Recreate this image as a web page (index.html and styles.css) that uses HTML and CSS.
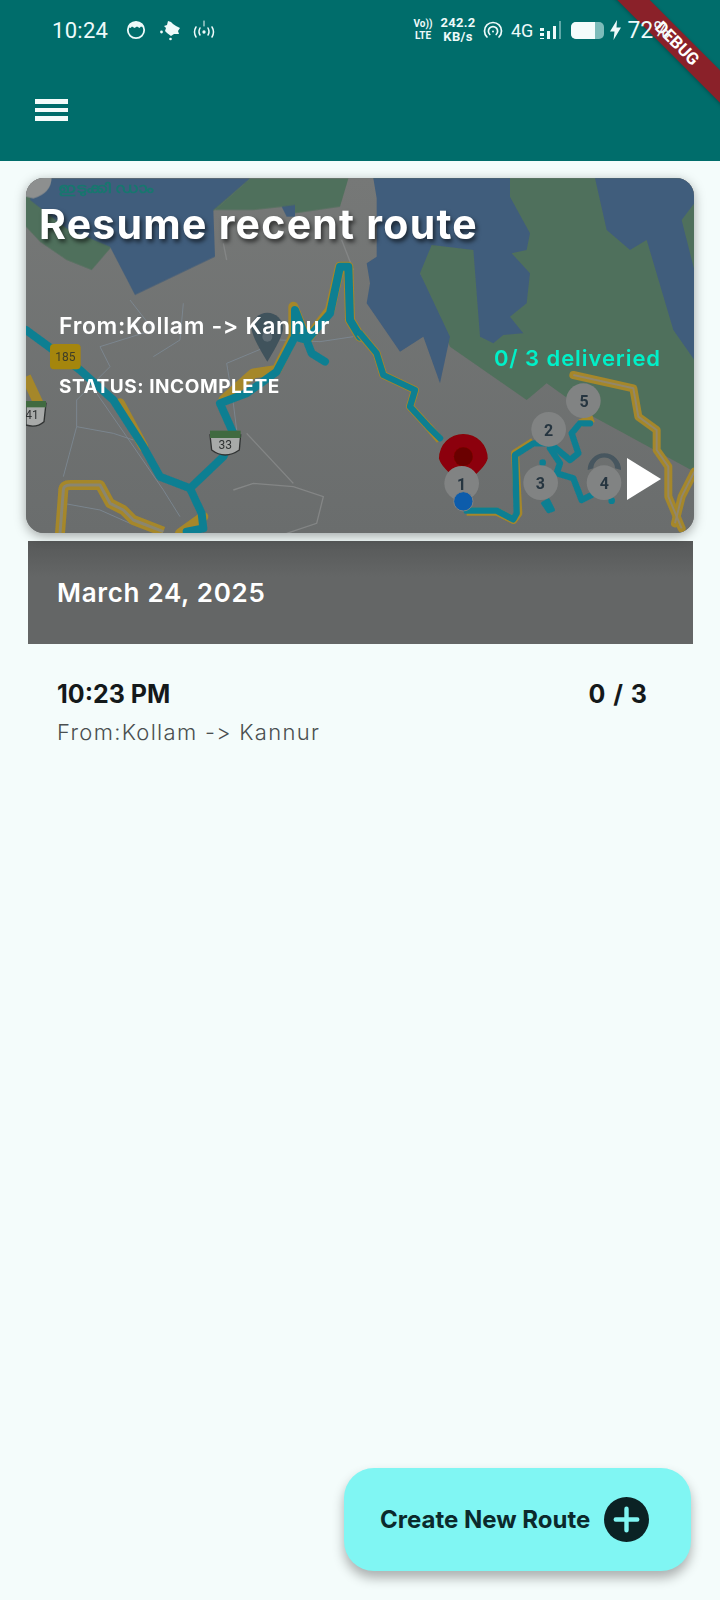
FILE: index.html
```html
<!DOCTYPE html>
<html lang="en">
<head>
    <meta charset="UTF-8">
    <meta name="viewport" content="width=device-width, initial-scale=1.0">
    <title>Routes</title>
    <link rel="stylesheet" href="styles.css">
</head>
<body>
    <header class="appbar">
        <div class="status">
            <div class="status-left">
                <span class="clock">10:24</span>
                <svg class="ic" width="20" height="20" viewBox="0 0 20 20">
                    <circle cx="10" cy="10" r="8.2" fill="none" stroke="#eefafa" stroke-width="1.8"/>
                    <path d="M3 7.5 Q3 2 10 2 Q17 2 17 7.5 L15 6.6 L13.5 8 L11 6.6 L8.5 8 L6 6.6 L4.5 8Z" fill="#eefafa"/>
                </svg>
                <svg class="ic cloud" width="22" height="22" viewBox="0 0 22 22">
                    <path d="M5 7 L8 6 L9 2 L12 3 L14 5 L17 7 L21 9 L19 12 L20 15 L15 15 L12 17 L8 14 L6 12 L7 9Z" fill="#eefafa"/>
                    <circle cx="2.5" cy="13" r="1.4" fill="#eefafa"/>
                    <circle cx="11.5" cy="20" r="1.3" fill="#eefafa"/>
                </svg>
                <svg class="ic" width="24" height="22" viewBox="0 0 24 22" fill="none" stroke="#eefafa" stroke-width="1.5" stroke-linecap="round">
                    <path d="M4 8 Q1 13 4 18"/>
                    <path d="M8 9 Q6 13 8 16"/>
                    <path d="M16 9 Q18 13 16 16"/>
                    <path d="M20 8 Q23 13 20 18"/>
                    <path d="M12 2 V7" stroke-width="1"/>
                    <circle cx="12" cy="13" r=".9" fill="#eefafa"/>
                </svg>
            </div>
            <div class="status-right">
                <div class="volte"><span>Vo))</span><span>LTE</span></div>
                <div class="speed"><span>242.2</span><span>KB/s</span></div>
                <svg class="ic" width="20" height="20" viewBox="0 0 20 20" fill="none" stroke="#eefafa" stroke-width="1.7" stroke-linecap="round">
                    <path d="M4 17 A8.5 8.5 0 1 1 16 17"/>
                    <path d="M6.8 14.5 A4.6 4.6 0 1 1 13.2 14.5"/>
                    <circle cx="10" cy="11.5" r="1" fill="#eefafa" stroke="none"/>
                </svg>
                <span class="net">4G</span>
                <div class="bars">
                    <i class="bar dim-dots"></i>
                    <i class="bar b2"></i>
                    <i class="bar b3"></i>
                    <i class="bar b4"></i>
                </div>
                <div class="battery"><div class="battery-fill"></div></div>
                <svg class="ic" width="13" height="20" viewBox="0 0 13 20"><path d="M8 0 L1 11.5 H5.5 L4.5 20 L12 7.5 H7.5Z" fill="#eefafa"/></svg>
                <span class="pct">72%</span>
            </div>
        </div>
        <button class="menu"><i></i><i></i><i></i></button>
    </header>

    <div class="debug">DEBUG</div>

    <main>
        <section class="card">
            <svg class="map" viewBox="0 0 668 355" preserveAspectRatio="none">
                <defs>
                    <linearGradient id="land" x1="0" y1="0" x2="0" y2="1">
                        <stop offset="0" stop-color="#767877"/>
                        <stop offset="1" stop-color="#6a6d6d"/>
                    </linearGradient>
                    <filter id="soft"><feGaussianBlur stdDeviation=".5"/></filter>
                </defs>
                <rect width="668" height="355" fill="url(#land)"/>

                <!-- left half, coords taken from the left crop -->
                <g transform="translate(-6,-8) scale(.33333)" filter="url(#soft)">
                    <path d="M18 25 V170 L60 215 L140 270 L215 300 L275 230 L585 120 L690 25Z" fill="#50705c"/>
                    <path d="M50 25 H690 L580 120 L585 260 L345 375 L270 230 L140 175 L30 90 Z" fill="#415d7b"/>
                    <path d="M585 120 L690 25 H985 L960 110 L820 130 L790 110 L700 120Z" fill="#50705c"/>
                    <path d="M785 110 L825 105 L825 140 L800 140Z" fill="#415d7b"/>
                    <path d="M18 20 H95 Q95 70 40 85 L18 80Z" fill="#8d8f8f"/>

                    <g fill="none" stroke="#7f8d99" stroke-width="3" opacity=".75">
                        <path d="M330 390 L400 480 L240 530 L270 590 L170 690 L170 770 L130 920"/>
                        <path d="M490 400 L480 510 L400 560"/>
                        <path d="M170 770 L280 790 L340 810"/>
                        <path d="M740 530 L620 580 L640 700 L650 780"/>
                        <path d="M130 1000 L240 1020 L330 1060"/>
                        <path d="M780 510 L900 515 L1000 500"/>
                        <path d="M230 670 L320 800 L430 960 L480 1040"/>
                    </g>
                    <g fill="none" stroke="#848686" stroke-width="4">
                        <path d="M640 960 L700 940 L820 950 L910 980 L890 1060 L800 1090"/>
                        <path d="M680 790 L820 940"/>
                        <path d="M610 220 L620 270"/>
                        <path d="M965 210 L1000 300"/>
                    </g>

                    <!-- gold roads under the route -->
                    <g fill="none" stroke="#a5872a" stroke-width="30" stroke-linejoin="round">
                        <path d="M120 1090 L130 960 Q130 945 150 945 H240 L270 1000 L310 1020 L340 1050 L430 1085"/>
                        <path d="M18 620 L60 710"/>
                    </g>
                    <path d="M120 1090 L130 960 Q130 945 150 945 H240 L270 1000 L310 1020 L340 1050 L430 1085" fill="none" stroke="#8a8670" stroke-width="9" stroke-linejoin="round"/>
                    <g fill="none" stroke="#a5872a" stroke-width="30" stroke-linecap="round" stroke-linejoin="round">
                        <path d="M300 700 L370 830"/>
                        <path d="M480 1090 L550 1040"/>
                        <path d="M610 690 L700 610 L770 600 L820 500 L820 410 L860 510 L930 420 L960 290 L985 290 L990 450 L1020 500"/>
                    </g>
                    <!-- route -->
                    <g fill="none" stroke="#0f7f92" stroke-width="24" stroke-linecap="round" stroke-linejoin="round">
                        <path d="M18 480 L100 540 L180 600 L280 690 L370 830 L420 920 L510 955 L610 860 L640 790 L600 700 L680 670 L770 605 L825 500 L825 420 L875 550 L915 575"/>
                        <path d="M825 500 L860 510 L930 430 L960 290 L985 290 L990 450 L1020 500"/>
                        <path d="M510 955 L545 1030 L550 1075 L500 1085"/>
                    </g>

                    <rect x="90" y="522" width="92" height="76" rx="12" fill="#a5860c"/>
                    <text x="136" y="574" class="shield" fill="#3d3d2a">185</text>
                    <path d="M18 700 H78 L72 755 Q50 775 18 765Z" fill="#a8aaa9" stroke="#303333" stroke-width="4"/>
                    <path d="M18 693 H78 V712 H18Z" fill="#3f6a3f"/>
                    <text x="36" y="748" class="shield" fill="#2f3233">41</text>
                    <path d="M570 795 H662 L658 840 Q615 870 575 840Z" fill="#a8aaa9" stroke="#303333" stroke-width="4"/>
                    <path d="M570 782 H662 V804 H570Z" fill="#3f6a3f"/>
                    <text x="616" y="836" class="shield" fill="#2f3233">33</text>

                    <path d="M742 575 Q695 500 695 475 A47 47 0 1 1 789 475 Q789 500 742 575Z" fill="#41525c"/>
                    <circle cx="742" cy="500" r="15" fill="#5c6a72"/>
                </g>

                <!-- right half, coords taken from the right crop -->
                <g transform="translate(334,-8) scale(.33333)" filter="url(#soft)">
                    <path d="M270 530 L500 690 L560 640 L700 740 L1003 905 V25 H40 L180 310Z" fill="#50705c"/>
                    <path d="M40 25 H450 V80 L510 190 L500 240 L455 250 L510 310 L500 400 L450 440 L490 490 L430 495 L400 520 L360 500 L340 240 L215 225 L180 310 L270 500 L240 640 L190 500 L120 545 L20 400 L30 340 L20 280 L50 260 L50 85Z" fill="#415d7b"/>
                    <path d="M705 25 H1003 V570 L940 480 L860 210 L810 240 L740 180Z" fill="#415d7b"/>
                    <path d="M1003 100 L965 150 L1003 300Z" fill="#50705c"/>

                    <g fill="none" stroke="#a5872a" stroke-width="24" stroke-linejoin="round" stroke-linecap="round">
                        <path d="M640 615 L820 655 L835 740 L890 780 L890 840 L925 890 L925 980 L965 1075"/>
                        <path d="M1003 905 L965 980 L945 1060"/>
                    </g>
                    <g fill="none" stroke="#92876a" stroke-width="6" stroke-linejoin="round">
                        <path d="M640 615 L820 655 L835 740 L890 780 L890 840 L925 890 L925 980 L965 1075"/>
                        <path d="M1003 905 L965 980 L945 1060"/>
                    </g>

                    <g fill="none" stroke="#a5872a" stroke-width="24" stroke-linejoin="round">
                        <path d="M0 490 L50 550 L70 615 L165 660 L150 710 L205 770 L240 810"/>
                        <path d="M320 1025 H410 L460 1050 L475 1030 L465 850 L520 815"/>
                        <path d="M660 760 L700 745"/>
                    </g>
                    <g fill="none" stroke="#0f7f92" stroke-width="19" stroke-linejoin="round" stroke-linecap="round">
                        <path d="M0 490 L50 550 L70 615 L165 660 L150 710 L205 770 L240 805"/>
                        <path d="M320 1022 H410 L460 1048 L470 1030 L465 855 L520 820 H570 L630 870 L655 850 L635 790 L660 760 H690"/>
                        <path d="M570 835 L600 880 L590 910 L640 925 L665 990 L695 975"/>
                    </g>
                    <path d="M548 1000 L565 990 L580 1020 L565 1025Z" fill="#0f7f92" stroke="#0f7f92" stroke-width="10" stroke-linejoin="round"/>
                    <circle cx="755" cy="992" r="10" fill="#0f7f92"/>
                    <circle cx="548" cy="878" r="10" fill="#0f7f92"/>

                    <path d="M310 945 Q240 890 237 865 A73 73 0 1 1 383 865 Q380 890 310 945Z" fill="#8c0007"/>
                    <circle cx="310" cy="860" r="28" fill="#6a0006"/>
                    <path d="M683 900 A50 50 0 0 1 783 900 L765 895 A32 32 0 0 0 700 895Z" fill="#46565f"/>

                    <g fill="#818383">
                        <circle cx="670" cy="692" r="52"/>
                        <circle cx="566" cy="778" r="52"/>
                        <circle cx="305" cy="940" r="52"/>
                        <circle cx="542" cy="938" r="52"/>
                        <circle cx="732" cy="938" r="52"/>
                    </g>
                    <text x="672" y="712" class="pin">5</text>
                    <text x="566" y="798" class="pin">2</text>
                    <text x="305" y="960" class="pin">1</text>
                    <text x="541" y="958" class="pin">3</text>
                    <text x="733" y="958" class="pin">4</text>
                    <circle cx="310" cy="994" r="29" fill="#0b5cab" stroke="#7f8181" stroke-width="3"/>
                </g>
                <text x="32" y="15" class="dam" textLength="96" lengthAdjust="spacingAndGlyphs">ഇടുക്കി ഡാം</text>
                <polygon points="601,280 601,322 635,301" fill="#fff"/>
            </svg>

            <div class="card-body">
                <h1 class="card-title">Resume recent route</h1>
                <div class="card-info">
                    <p class="card-route">From:Kollam -&gt; Kannur</p>
                    <p class="card-status">STATUS: INCOMPLETE</p>
                </div>
                <p class="card-count">0/ 3 deliveried</p>
            </div>
        </section>

        <div class="date-bar">March 24, 2025</div>

        <div class="route-row">
            <div class="route-top">
                <span>10:23 PM</span>
                <span class="route-count">0 / 3</span>
            </div>
            <p class="route-sub">From:Kollam -&gt; Kannur</p>
        </div>
    </main>

    <button class="fab">
        <span>Create New Route</span>
        <svg width="45" height="45" viewBox="0 0 46 46">
            <circle cx="23" cy="23" r="23" fill="#0b2224"/>
            <path d="M23 12 V34 M12 23 H34" stroke="#80f6f3" stroke-width="4.5" stroke-linecap="round"/>
        </svg>
    </button>
</body>
</html>
```

FILE: styles.css
```css
* { box-sizing: border-box; }

body {
  margin: 0;
  width: 720px;
  height: 1600px;
  position: relative;
  overflow: hidden;
  background: #f4fcfb;
  font-family: Inter, "Open Sans", sans-serif;
}

p, h1 { margin: 0; }

/* header */
.appbar {
  height: 161px;
  background: #006d6b;
  color: #eefafa;
}

.status {
  display: flex;
  justify-content: space-between;
  align-items: center;
  height: 60px;
  padding: 0 0 0 52px;
  font-family: Roboto, sans-serif;
}

.status-left, .status-right {
  display: flex;
  align-items: center;
}

.status-left { gap: 11px; }
.clock { font-size: 22px; margin-right: 7px; letter-spacing: .3px; }
.cloud { margin-left: 2px; }

.status-right { width: 306px; flex: none; }

.volte, .speed {
  display: flex;
  flex-direction: column;
  align-items: center;
  font-weight: 700;
  line-height: 12px;
}

.volte { font-size: 10px; width: 18px; margin-right: 8px; }
.speed { font-size: 13px; line-height: 14px; width: 36px; margin-right: 7px; letter-spacing: .3px; }

.net { font-size: 18px; margin: 0 7px 0 8px; }

.bars {
  display: flex;
  align-items: flex-end;
  gap: 3px;
  width: 21px;
  height: 17px;
  margin-right: 10px;
}

.bar { display: block; width: 4px; background: #eefafa; }
.dim-dots { height: 11px; background: repeating-linear-gradient(#eefafa 0 3px, transparent 3px 5px); }
.b2 { height: 8px; }
.b3 { height: 13px; }
.b4 { height: 18px; width: 3px; background: #5fa9a8; }

.battery {
  width: 33px;
  height: 17px;
  border-radius: 5px;
  background: #7dbcba;
  margin-right: 5px;
}

.battery-fill {
  width: 24px;
  height: 17px;
  border-radius: 5px 0 0 5px;
  background: #f4fcfb;
}

.pct {
  position: relative;
  z-index: 2;
  font-size: 23px;
  margin-left: 5px;
  white-space: nowrap;
}

.menu {
  display: flex;
  flex-direction: column;
  gap: 4px;
  width: 33px;
  margin: 39px 0 0 35px;
  padding: 0;
  border: 0;
  background: none;
}

.menu i {
  display: block;
  width: 33px;
  height: 4.5px;
  background: #f4fcfb;
}

/* flutter debug ribbon */
.debug {
  position: absolute;
  top: 32px;
  left: 577px;
  width: 200px;
  height: 23px;
  transform: rotate(45deg);
  background: #8a2129;
  color: #fff;
  font: 700 17px/23px Roboto, sans-serif;
  text-align: center;
  box-shadow: 0 1px 4px rgba(0, 0, 0, .25);
}

/* recent route card */
.card {
  position: relative;
  height: 355px;
  margin: 17px 26px 0;
  border-radius: 18px;
  overflow: hidden;
  box-shadow: 0 3px 12px rgba(0, 0, 0, .35);
  background: #6f7170;
}

.map {
  position: absolute;
  top: 0;
  left: 0;
  width: 100%;
  height: 100%;
}

.shield {
  font: 400 36px Roboto, sans-serif;
  text-anchor: middle;
}

.pin {
  font: 700 48px Roboto, sans-serif;
  fill: #263540;
  text-anchor: middle;
}

.dam {
  font: 700 14px "Noto Sans", sans-serif;
  fill: #17776f;
}

.card-body {
  position: relative;
  display: flex;
  flex-direction: column;
  height: 100%;
  color: #fff;
}

.card-title {
  margin: 23px 0 0 13px;
  font-size: 41px;
  line-height: 46px;
  font-weight: 700;
  letter-spacing: 1.25px;
  text-shadow: 2px 3px 4px rgba(0, 0, 0, .6);
}

.card-info { margin: 65px 0 0 33px; }

.card-route {
  font-size: 23px;
  line-height: 28px;
  font-weight: 600;
  letter-spacing: .65px;
}

.card-status {
  margin-top: 36px;
  font-size: 19px;
  line-height: 22px;
  font-weight: 700;
  letter-spacing: .55px;
}

.card-count {
  position: absolute;
  top: 167px;
  right: 33px;
  color: #00f0c8;
  font-size: 22px;
  line-height: 26px;
  font-weight: 600;
  letter-spacing: .93px;
}

/* list */
.date-bar {
  display: flex;
  align-items: center;
  height: 103px;
  margin: 8px 27.5px 0;
  padding: 0 0 0 29.5px;
  background: linear-gradient(#575959, #646666 35%);
  color: #fff;
  font-size: 26px;
  font-weight: 600;
  letter-spacing: .7px;
}

.route-row { padding: 33px 72px 0 57px; }

.route-top {
  display: flex;
  justify-content: space-between;
  color: #14191a;
  font-size: 25px;
  line-height: 34px;
  font-weight: 700;
}

.route-count { letter-spacing: 1px; }

.route-sub {
  margin-top: 7px;
  color: #4a4f50;
  font-size: 22px;
  line-height: 28px;
  font-weight: 300;
  letter-spacing: 1.3px;
}

/* floating button */
.fab {
  position: absolute;
  right: 29.5px;
  bottom: 29px;
  display: flex;
  align-items: center;
  gap: 14px;
  width: 347px;
  height: 103px;
  padding: 0 0 0 36.5px;
  border: 0;
  border-radius: 30px;
  background: #80f6f3;
  color: #0b2a2c;
  font-family: Inter, "Open Sans", sans-serif;
  font-size: 24px;
  font-weight: 700;
  box-shadow: 0 7px 12px rgba(0, 0, 0, .3);
}
```
